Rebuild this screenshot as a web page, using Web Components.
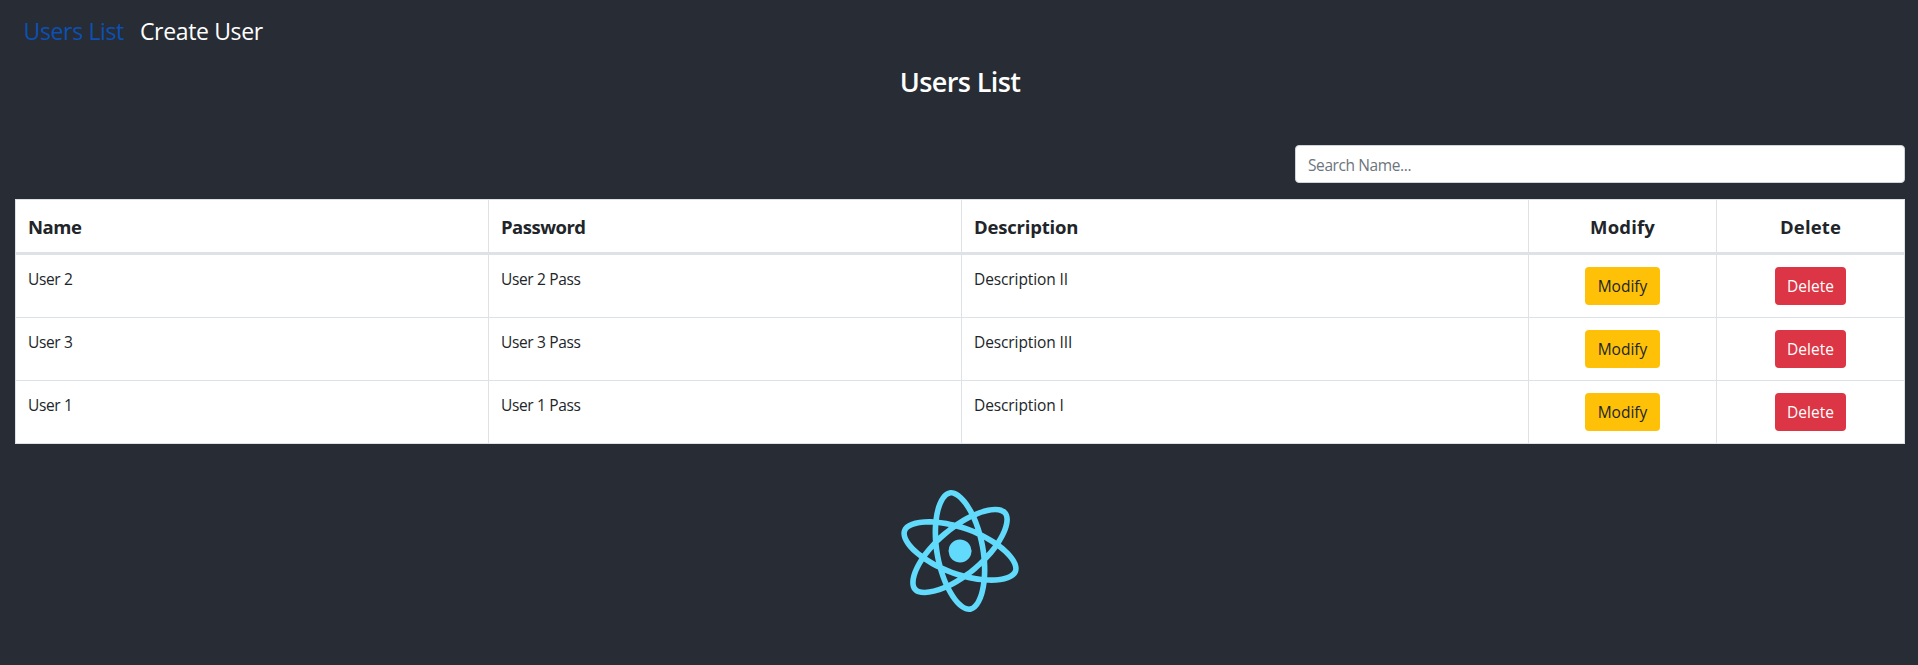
<!DOCTYPE html>
<html lang="en">
<head>
<meta charset="utf-8">
<title>Users List</title>
<style>
body{margin:0;background:#282c34;color:#fff;font:15.5px/24px "Open Sans","Noto Sans",sans-serif;min-height:100vh;overflow:hidden}
</style>
</head>
<body>
<users-app></users-app>
<script>
const define = (name, html) => customElements.define(name, class extends HTMLElement {
  constructor() {
    super();
    this.attachShadow({mode: 'open'}).innerHTML = html;
  }
});

define('nav-link', `<style>
:host{display:block;font-size:23px;line-height:36px;letter-spacing:-.35px;color:#fff;white-space:nowrap}
:host([active]){color:#0b51b5}
a{color:inherit;text-decoration:none}
</style><a><slot></slot></a>`);

define('app-nav', `<style>
:host{display:flex;gap:16px;padding:13px 23.5px 0;height:36px}
</style><slot></slot>`);

define('search-box', `<style>
:host{display:block;width:610px}
input{box-sizing:border-box;display:block;width:100%;height:38px;padding:7px 12px 5px;border:1px solid #ced4da;border-radius:4px;background:#fff;font:inherit;letter-spacing:-.4px;color:#495057}
input::placeholder{color:#6c757d;opacity:1}
</style><input type="text" placeholder="Search Name...">`);

define('action-button', `<style>
:host{display:inline-block}
button{display:block;box-sizing:border-box;width:75px;height:38px;padding:0;border:0;border-radius:4px;background:#ffc107;color:#212529;font:inherit;line-height:38px;letter-spacing:0}
:host([danger]) button{width:71px;background:#dc3545;color:#fff}
</style><button><slot></slot></button>`);

define('table-row', `<style>
:host{display:grid;grid-template-columns:473fr 473fr 567fr 188fr 188fr;height:62px;border-bottom:1px solid #dee2e6;letter-spacing:-.35px}
:host([head]){height:52px;border-bottom-width:3px;font-size:18.5px;font-weight:700;line-height:30px;letter-spacing:-.5px}
::slotted(*){box-sizing:border-box;padding:12px;border-left:1px solid #dee2e6}
::slotted(:nth-child(3)){letter-spacing:-.1px}
::slotted(:nth-child(n+4)){text-align:center;letter-spacing:.15px}
:host([head]) ::slotted(:nth-child(3)){letter-spacing:-.2px}
</style><slot></slot>`);

define('users-table', `<style>
:host{display:block;background:#fff;color:#212529;border:solid #dee2e6;border-width:1px 1px 0 0}
</style><slot></slot>`);

define('react-logo', `<style>
:host{display:block;width:150px;height:150px}
svg{display:block}
</style>
<svg width="150" height="150" viewBox="-75 -75 150 150">
<g fill="#61dafb" transform="rotate(20) scale(.252) translate(-420.9 -296.5)">
<path d="M666.3 296.5c0-32.5-40.7-63.3-103.1-82.4 14.4-63.6 8-114.2-20.2-130.4-6.5-3.8-14.1-5.6-22.4-5.6v22.3c4.6 0 8.3.9 11.4 2.6 13.6 7.8 19.5 37.5 14.9 75.7-1.1 9.4-2.9 19.3-5.1 29.4-19.6-4.8-41-8.5-63.5-10.9-13.5-18.5-27.5-35.3-41.6-50 32.6-30.3 63.2-46.9 84-46.9V78c-27.5 0-63.5 19.6-99.9 53.6-36.4-33.8-72.4-53.2-99.9-53.2v22.3c20.7 0 51.4 16.5 84 46.6-14 14.7-28 31.4-41.3 49.9-22.6 2.4-44 6.1-63.6 11-2.3-10-4-19.7-5.2-29-4.7-38.2 1.1-67.9 14.6-75.8 3-1.8 6.9-2.6 11.5-2.6V78.5c-8.4 0-16 1.8-22.6 5.6-28.1 16.2-34.4 66.7-19.9 130.1-62.2 19.2-102.7 49.9-102.7 82.3 0 32.5 40.7 63.3 103.1 82.4-14.4 63.6-8 114.2 20.2 130.4 6.5 3.8 14.1 5.6 22.5 5.6 27.5 0 63.5-19.6 99.9-53.6 36.4 33.8 72.4 53.2 99.9 53.2 8.4 0 16-1.8 22.6-5.6 28.1-16.2 34.4-66.7 19.9-130.1 62-19.1 102.5-49.9 102.5-82.3zm-130.2-66.7c-3.7 12.9-8.3 26.2-13.5 39.5-4.1-8-8.4-16-13.1-24-4.6-8-9.5-15.8-14.4-23.4 14.2 2.1 27.9 4.7 41 7.9zm-45.8 106.5c-7.8 13.5-15.8 26.3-24.1 38.2-14.9 1.3-30 2-45.2 2-15.1 0-30.2-.7-45-1.9-8.3-11.9-16.4-24.6-24.2-38-7.6-13.1-14.5-26.4-20.8-39.8 6.2-13.4 13.2-26.8 20.7-39.9 7.8-13.5 15.8-26.3 24.1-38.2 14.9-1.3 30-2 45.2-2 15.1 0 30.2.7 45 1.9 8.3 11.9 16.4 24.6 24.2 38 7.6 13.1 14.5 26.4 20.8 39.8-6.3 13.4-13.2 26.8-20.7 39.9zm32.3-13c5.4 13.4 10 26.8 13.8 39.8-13.1 3.2-26.9 5.9-41.2 8 4.9-7.7 9.8-15.6 14.4-23.7 4.6-8 8.9-16.1 13-24.1zM421.2 430c-9.3-9.6-18.6-20.3-27.8-32 9 .4 18.2.7 27.5.7 9.4 0 18.7-.2 27.8-.7-9 11.7-18.3 22.4-27.5 32zm-74.4-58.9c-14.2-2.1-27.9-4.7-41-7.9 3.7-12.9 8.3-26.2 13.5-39.5 4.1 8 8.4 16 13.1 24 4.7 8 9.5 15.8 14.4 23.4zM420.7 163c9.3 9.6 18.6 20.3 27.8 32-9-.4-18.2-.7-27.5-.7-9.4 0-18.7.2-27.8.7 9-11.7 18.3-22.4 27.5-32zm-74 58.9c-4.9 7.7-9.8 15.6-14.4 23.7-4.6 8-8.9 16-13 24-5.4-13.4-10-26.8-13.8-39.8 13.1-3.1 26.9-5.8 41.2-7.9zm-90.5 125.2c-35.4-15.1-58.3-34.9-58.3-50.6 0-15.7 22.9-35.6 58.3-50.6 8.6-3.7 18-7 27.7-10.1 5.7 19.6 13.2 40 22.5 60.9-9.2 20.8-16.6 41.1-22.2 60.6-9.9-3.1-19.3-6.5-28-10.2zM310 490c-13.6-7.8-19.5-37.5-14.9-75.7 1.1-9.4 2.9-19.3 5.1-29.4 19.6 4.8 41 8.5 63.5 10.9 13.5 18.5 27.5 35.3 41.6 50-32.6 30.3-63.2 46.9-84 46.9-4.5-.1-8.3-1-11.3-2.7zm237.2-76.2c4.7 38.2-1.1 67.9-14.6 75.8-3 1.8-6.9 2.6-11.5 2.6-20.7 0-51.4-16.5-84-46.6 14-14.7 28-31.4 41.3-49.9 22.6-2.4 44-6.1 63.6-11 2.3 10.1 4.1 19.8 5.2 29.1zm38.5-66.7c-8.6 3.7-18 7-27.7 10.1-5.7-19.6-13.2-40-22.5-60.9 9.2-20.8 16.6-41.1 22.2-60.6 9.9 3.1 19.3 6.5 28.1 10.2 35.4 15.1 58.3 34.9 58.3 50.6-.1 15.7-23 35.6-58.4 50.6z"/>
<circle cx="420.9" cy="296.5" r="45.7"/>
</g></svg>`);

const users = [['2', 'II'], ['3', 'III'], ['1', 'I']];
define('users-app', `<style>
:host{display:flex;flex-direction:column}
h3{margin:16px 0 0;text-align:center;font-size:27px;line-height:34px;font-weight:600;letter-spacing:-.6px}
main{display:flex;flex-direction:column;padding:0 13px 0 15px}
search-box{align-self:flex-end;margin:46px 0 16px}
react-logo{align-self:center;margin-top:32px}
</style>
<app-nav><nav-link active>Users List</nav-link><nav-link>Create User</nav-link></app-nav>
<main>
<h3>Users List</h3>
<search-box></search-box>
<users-table>
<table-row head><div>Name</div><div>Password</div><div>Description</div><div>Modify</div><div>Delete</div></table-row>
${users.map(([n, d]) => `<table-row><div>User ${n}</div><div>User ${n} Pass</div><div>Description ${d}</div><div><action-button>Modify</action-button></div><div><action-button danger>Delete</action-button></div></table-row>`).join('')}
</users-table>
<react-logo></react-logo>
</main>`);
</script>
</body>
</html>
